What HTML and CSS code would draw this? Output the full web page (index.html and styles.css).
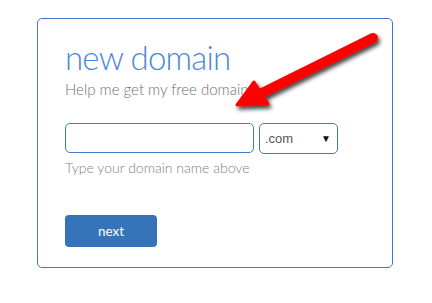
FILE: index.html
```html
<!DOCTYPE HTML>
<html>
<head>
<meta charset="utf-8" />
<title>new domain</title>
<link rel="stylesheet" href="styles.css">
</head>
<body>
<div class="card">
	<h1 class="title">new domain</h1>
	<p class="sub">Help me get my free domain</p>
	<div class="row">
		<input class="domain" type="text" />
		<div class="tld"><span>.com</span><span class="caret">&#9660;</span></div>
	</div>
	<p class="hint">Type your domain name above</p>
	<button class="next">next</button>
</div>
<svg class="arrow" width="432" height="303" viewBox="0 0 432 303">
	<defs>
		<filter id="sh" x="-20%" y="-20%" width="140%" height="140%">
			<feDropShadow dx="2" dy="3" stdDeviation="2" flood-color="#000" flood-opacity="0.75"/>
		</filter>
	</defs>
	<g filter="url(#sh)">
		<line x1="373" y1="38" x2="258" y2="95" stroke="#ff0000" stroke-width="10" stroke-linecap="round"/>
		<polygon points="237,105 254,82 268,104" fill="#ff0000" stroke="#ff0000" stroke-width="3" stroke-linejoin="round"/>
	</g>
</svg>
</body>
</html>
```
FILE: styles.css
```css
*{ padding:0; margin:0; border:0;}
body{ background:#fff; font-family:Lato, "Open Sans", sans-serif; position:relative; width:432px; height:303px; overflow:hidden;}
.card{ margin:18px 0 0 37px; width:356px; height:250px; border:1px solid #3d78c9; border-radius:5px; padding:0 0 0 27px; box-sizing:border-box; display:flex; flex-direction:column; align-items:flex-start;}
.title{ font-weight:300; font-size:33px; letter-spacing:-0.8px; color:#4a87da; line-height:40px; margin-top:18px;}
.sub{ font-weight:300; font-size:15px; color:#707070; line-height:20px; margin-top:2px;}
.row{ display:flex; gap:5px; margin-top:24px;}
.domain{ width:189px; height:30px; border:1px solid #3f7bc4; border-radius:5px; box-sizing:border-box; font-size:14px; padding:0 6px;}
.tld{ width:79px; height:31px; border:1px solid #3f7bc4; border-radius:5px; box-sizing:border-box; display:flex; align-items:center; justify-content:space-between; padding:0 6px 0 5px; font-family:"Liberation Sans", Arial, sans-serif; font-size:13px; color:#555;}
.tld .caret{ font-size:10px; color:#111;}
.hint{ font-weight:300; font-size:14px; color:#808080; line-height:18px; margin-top:5px;}
.next{ margin-top:38px; width:92px; height:32px; background:#3674b9; color:#fff; border-radius:4px; font-family:Lato, sans-serif; font-size:13.5px; font-weight:400;}
.arrow{ position:absolute; left:0; top:0;}
```
